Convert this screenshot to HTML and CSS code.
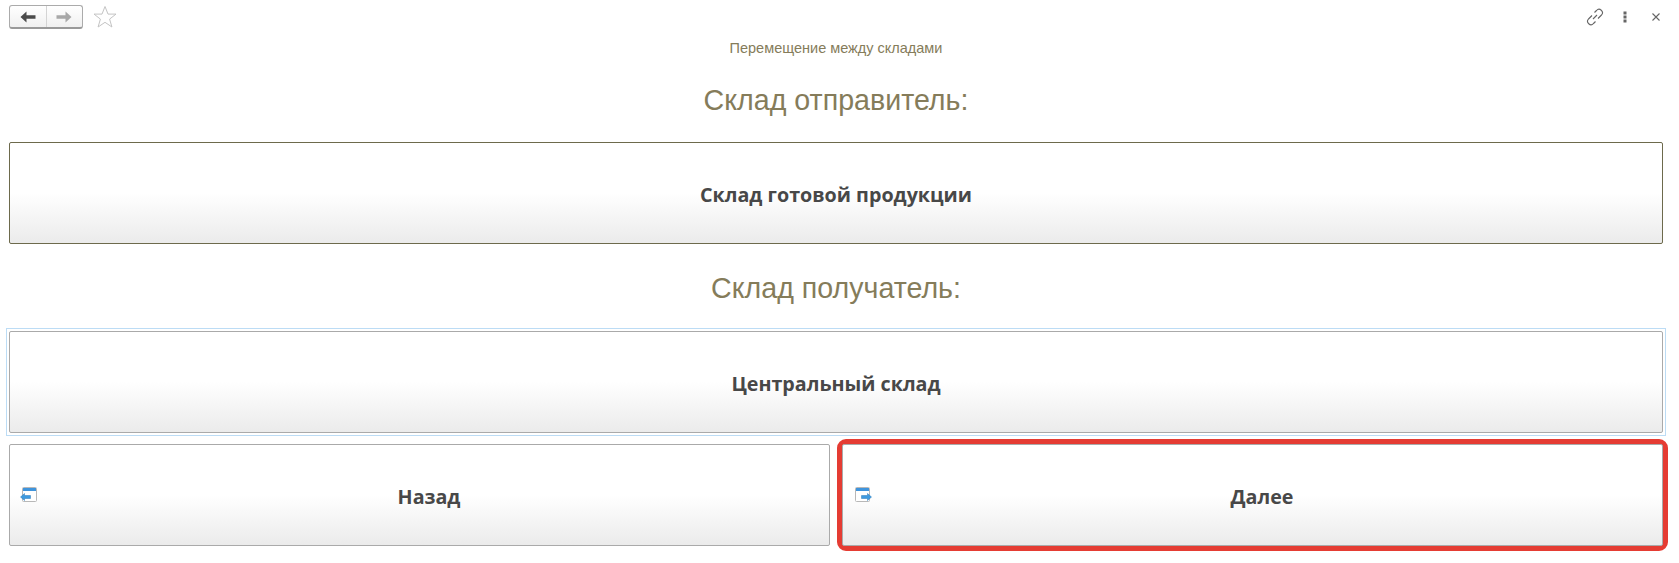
FILE: index.html
```html
<!DOCTYPE html>
<html lang="ru">
<head>
<meta charset="utf-8">
<title>Перемещение между складами</title>
<link rel="stylesheet" href="styles.css">
</head>
<body>
<div class="page">
  <header class="topbar">
    <div class="left">
      <div class="nav">
        <span class="nav-btn"><svg width="16" height="12" viewBox="0 0 16 12"><path d="M0.500 6L6.500 0.500V4.300H15.500V7.700H6.500V11.500z" fill="#4a4a4a"/></svg></span>
        <span class="nav-btn"><svg width="16" height="12" viewBox="0 0 16 12"><path d="M15.500 6L9.500 0.500V4.300H0.500V7.700H9.500V11.500z" fill="#a8a8a8"/></svg></span>
      </div>
      <svg class="star" width="24" height="24" viewBox="0 0 24 24"><path d="M12 1.500l3 7.600h8l-6.400 5 2.300 7.900L12 17.300 5.100 22l2.300-7.900L1 9.100h8z" fill="none" stroke="#c4c4c4"/></svg>
    </div>
    <div class="right">
      <svg width="18" height="18" viewBox="0 0 18 18" fill="none" stroke="#666" stroke-width="1.100"><path d="M8.500 4.500l2-2a3 3 0 0 1 5 4.500l-3.500 3.500"/><path d="M9.500 13.500l-2 2a3 3 0 0 1-5-4.500L6 7.500"/><path d="M7 11l4-4"/></svg>
      <svg width="16" height="16" viewBox="0 0 16 16" fill="#666"><rect x="5.500" y="2.500" width="3" height="3"/><rect x="5.500" y="6.500" width="3" height="3"/><rect x="5.500" y="10.500" width="3" height="3"/></svg>
      <svg width="16" height="16" viewBox="0 0 16 16" stroke="#666" stroke-width="1.100"><path d="M4.500 4.500l7 7M11.500 4.500l-7 7"/></svg>
    </div>
  </header>
  <div class="subtitle">Перемещение между складами</div>
  <h2 class="heading first">Склад отправитель:</h2>
  <button class="btn dark">Склад готовой продукции</button>
  <h2 class="heading second">Склад получатель:</h2>
  <div class="focus-wrap"><button class="btn">Центральный склад</button></div>
  <div class="actions">
    <button class="btn act"><svg class="ico ico-back" width="17" height="15" viewBox="0 0 17 15"><rect x="2.500" y="0.500" width="14" height="14" rx="1" fill="#fff" stroke="#b8b8b8"/><rect x="3" y="1" width="13" height="3" fill="#3f94dc"/><path d="M0.500 10L4.500 6.500V8.500H10.500V11.500H4.500V13.500z" fill="#3d9ae0" stroke="#2a78b8" stroke-width="0.500"/></svg>Назад</button>
    <div class="hl"><button class="btn act"><svg class="ico ico-next" width="17" height="15" viewBox="0 0 17 15"><rect x="0.500" y="0.500" width="14" height="14" rx="1" fill="#fff" stroke="#b8b8b8"/><rect x="1" y="1" width="13" height="3" fill="#3f94dc"/><path d="M16.500 10L12.500 6.500V8.500H6.500V11.500H12.500V13.500z" fill="#3d9ae0" stroke="#2a78b8" stroke-width="0.500"/></svg>Далее</button></div>
  </div>
</div>
</body>
</html>
```
FILE: styles.css
```css
html, body { margin: 0; padding: 0; background: #fff; }
.page { width: 1679px; height: 563px; overflow: hidden; box-sizing: border-box; padding: 0 16px 0 9px; font-family: "Open Sans", sans-serif; }
.topbar { display: flex; justify-content: space-between; align-items: center; height: 34px; }
.left { display: flex; align-items: center; gap: 10px; }
.nav { display: flex; box-sizing: border-box; width: 74px; height: 24px; border: 1px solid #ababab; border-bottom: 2px solid #999; border-radius: 3px; background: linear-gradient(#fff, #f0f0f0); }
.nav-btn { flex: 1; display: flex; align-items: center; justify-content: center; }
.nav-btn + .nav-btn { border-left: 1px solid #d4d4d4; }
.right { display: flex; align-items: center; gap: 14px; margin-right: -1px; }
.subtitle { height: 16px; margin-top: 6px; text-align: center; font: 14.500px "Liberation Sans", sans-serif; color: #857c5a; }
.heading { margin: 0; text-align: center; font: 400 28.600px "Liberation Sans", sans-serif; color: #857c5a; }
.first { margin-top: 28px; margin-bottom: 25px; }
.second { margin-top: 28px; margin-bottom: 23px; }
.btn { display: block; position: relative; box-sizing: border-box; width: 100%; height: 102px; padding: 2px 0 0; background: linear-gradient(#fff 0 50%, #ebebeb); border: 1px solid #aaa; border-radius: 2px; font: 700 19.700px "Open Sans", sans-serif; color: #484848; }
.dark { border-color: #6d6a4c; }
.focus-wrap { margin: 0 -3px; padding: 2px; border: 1px solid #bcdcf5; }
.actions { display: grid; grid-template-columns: 821px 1fr; gap: 12px; margin-top: 8px; }
.act { padding-left: 19px; }
.hl { margin: -5px; border: 5px solid #e53c33; border-radius: 9px; }
.ico { position: absolute; top: 42px; }
.ico-back { left: 10px; }
.ico-next { left: 12px; }
```
